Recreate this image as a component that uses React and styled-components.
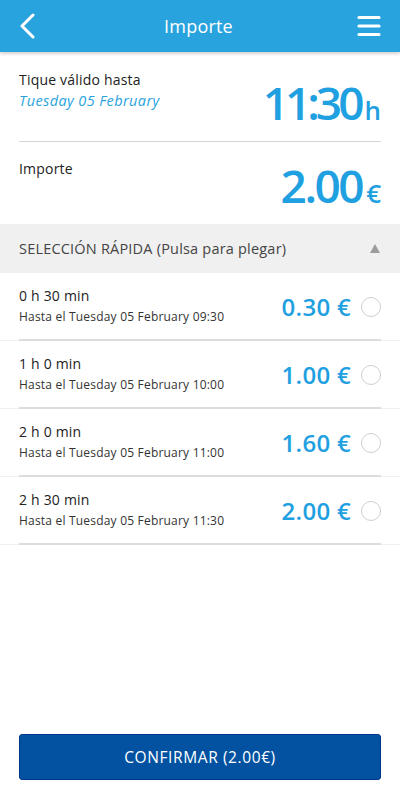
import React from 'react'
import styled, { createGlobalStyle } from 'styled-components'

const Global = createGlobalStyle`
  html, body { margin: 0; padding: 0; background: #fff; }
  body { font-family: 'Open Sans', 'DejaVu Sans', sans-serif; color: #222; }
  * { box-sizing: border-box; }
`

const Page = styled.div`
  height: 800px;
  display: flex;
  flex-direction: column;
  background: #fff;
`

const Header = styled.header`
  height: 52px;
  flex: none;
  background: #29a3de;
  display: flex;
  align-items: center;
  justify-content: space-between;
  padding: 0 19px 0 16px;
  box-shadow: 0 2px 3px rgba(0,0,0,.18);
  position: relative;
  z-index: 1;
`

const Title = styled.h1`
  margin: 0;
  font-size: 18px;
  font-weight: 400;
  color: #fff;
  letter-spacing: .2px;
`

const IconBtn = styled.div`
  width: 24px;
  height: 24px;
  display: flex;
  align-items: center;
  justify-content: center;
`

const Section = styled.div`
  margin: 0 19px;
  display: flex;
  align-items: flex-start;
  justify-content: space-between;
  border-bottom: ${p => (p.$divided ? '1px solid #d4d4d4' : 'none')};
  height: ${p => p.$h}px;
  padding-top: ${p => p.$pt}px;
`

const Label = styled.div`
  font-size: 14px;
  color: #222;
  line-height: 18px;
  letter-spacing: .2px;
`

const DateText = styled.div`
  font-size: 14.5px;
  font-style: italic;
  color: #29a3de;
  line-height: 18px;
  margin-top: 3px;
  letter-spacing: .4px;
`

const BigValue = styled.div`
  color: #1fa0e0;
  font-weight: 600;
  font-size: 46px;
  line-height: 1;
  letter-spacing: ${p => p.$ls}px;
  margin-top: ${p => p.$mt}px;
  white-space: nowrap;
  span {
    font-size: 26px;
    letter-spacing: 0;
    margin-left: 4px;
  }
`

const QuickBar = styled.div`
  height: 49px;
  background: #f0f0f0;
  display: flex;
  align-items: center;
  justify-content: space-between;
  padding: 0 19px;
  font-size: 14.5px;
  letter-spacing: .2px;
  color: #444;
`

const Caret = styled.div`
  width: 0;
  height: 0;
  border-left: 5px solid transparent;
  border-right: 5px solid transparent;
  border-bottom: 9px solid #9c9c9c;
  margin-right: 1px;
`

const Row = styled.div`
  height: 68px;
  display: flex;
  align-items: center;
  padding: 0 19px;
  border-bottom: 1px solid #f0f0f0;
  position: relative;
  &::after {
    content: '';
    position: absolute;
    left: 19px;
    right: 19px;
    bottom: -1px;
    height: 2px;
    background: #dcdcdc;
  }
`

const RowText = styled.div`
  flex: 1;
  display: flex;
  flex-direction: column;
  gap: 5px;
  padding-bottom: 3px;
`

const RowTitle = styled.div`
  font-size: 14px;
  color: #222;
  line-height: 17px;
  letter-spacing: .2px;
`

const RowSub = styled.div`
  font-size: 12px;
  color: #333;
  line-height: 15px;
  letter-spacing: .2px;
`

const Price = styled.div`
  color: #1fa0e0;
  font-size: 24px;
  font-weight: 600;
  margin-right: 10px;
  letter-spacing: .3px;
`

const Radio = styled.div`
  width: 20px;
  height: 20px;
  border-radius: 50%;
  border: 1.5px solid #cfcfcf;
  flex: none;
`

const Footer = styled.div`
  margin-top: auto;
  padding: 0 19px 20px;
`

const Confirm = styled.button`
  width: 100%;
  height: 46px;
  background: #0252a1;
  border: 1px solid #00358a;
  border-radius: 3px;
  color: #fff;
  font-family: inherit;
  font-size: 15.5px;
  letter-spacing: .6px;
`

const options = [
  { dur: '0 h 30 min', until: '09:30', price: '0.30' },
  { dur: '1 h 0 min', until: '10:00', price: '1.00' },
  { dur: '2 h 0 min', until: '11:00', price: '1.60' },
  { dur: '2 h 30 min', until: '11:30', price: '2.00' },
]

export default function App() {
  return (
    <Page>
      <Global />
      <Header>
        <IconBtn>
          <svg width="18" height="26" viewBox="0 0 18 26">
            <path d="M14 2 L3 13 L14 24" fill="none" stroke="#fff" strokeWidth="3" strokeLinecap="round" strokeLinejoin="round" />
          </svg>
        </IconBtn>
        <Title>Importe</Title>
        <svg width="24" height="24" viewBox="0 0 24 24">
          <path d="M2 3.5 H22 M2 12 H22 M2 20.5 H22" stroke="#fff" strokeWidth="3.2" strokeLinecap="round" />
        </svg>
      </Header>

      <Section $divided $h={90} $pt={19}>
        <div>
          <Label>Tique válido hasta</Label>
          <DateText>Tuesday 05 February</DateText>
        </div>
        <BigValue $mt={8} $ls={-4}>11:30<span>h</span></BigValue>
      </Section>

      <Section $h={82} $pt={18}>
        <Label>Importe</Label>
        <BigValue $mt={2} $ls={-2.5}>2.00<span>€</span></BigValue>
      </Section>

      <QuickBar>
        <span>SELECCIÓN RÁPIDA (Pulsa para plegar)</span>
        <Caret />
      </QuickBar>

      {options.map(o => (
        <Row key={o.dur}>
          <RowText>
            <RowTitle>{o.dur}</RowTitle>
            <RowSub>Hasta el Tuesday 05 February {o.until}</RowSub>
          </RowText>
          <Price>{o.price} €</Price>
          <Radio />
        </Row>
      ))}

      <Footer>
        <Confirm>CONFIRMAR (2.00€)</Confirm>
      </Footer>
    </Page>
  )
}
